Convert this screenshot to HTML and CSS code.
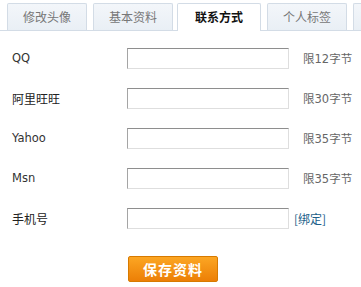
FILE: index.html
```html
<!DOCTYPE html>
<html>
<head>
<meta charset="utf-8">
<link rel="stylesheet" href="styles.css">
</head>
<body>
<div class="tabs">
  <a class="tab">修改头像</a>
  <a class="tab">基本资料</a>
  <a class="tab active">联系方式</a>
  <a class="tab">个人标签</a>
  <a class="tab tab-edge"></a>
</div>
<form class="form">
  <div class="row"><label class="label latin">QQ</label><input class="field" type="text"><span class="hint">限12字节</span></div>
  <div class="row"><label class="label">阿里旺旺</label><input class="field" type="text"><span class="hint">限30字节</span></div>
  <div class="row"><label class="label latin">Yahoo</label><input class="field" type="text"><span class="hint">限35字节</span></div>
  <div class="row"><label class="label latin">Msn</label><input class="field" type="text"><span class="hint">限35字节</span></div>
  <div class="row"><label class="label">手机号</label><input class="field" type="text"><a class="bind">[绑定]</a></div>
  <div class="actions"><button class="save" type="button">保存资料</button></div>
</form>
</body>
</html>
```
FILE: styles.css
```css
html, body {
  margin: 0;
  padding: 0;
  background: #fff;
  overflow: hidden;
}
body {
  width: 361px;
  height: 287px;
  font-family: "DejaVu Sans", "Noto Sans CJK SC", sans-serif;
  font-size: 12px;
  color: #333;
}
.tabs {
  display: flex;
  gap: 6px;
  padding: 3px 0 0 7px;
  border-bottom: 1px solid #d3dce6;
  height: 27px;
  white-space: nowrap;
}
.tab {
  flex: none;
  width: 78px;
  height: 26px;
  line-height: 26px;
  text-align: center;
  border: 1px solid #d3dce6;
  border-bottom: none;
  border-radius: 2px 2px 0 0;
  background: linear-gradient(#f3f6fa, #e9eff5);
  color: #777;
  font-family: "Noto Sans CJK SC", sans-serif;
  font-size: 12px;
}
.tab.active {
  width: 82px;
  height: 27px;
  margin-left: -2px;
  background: #fff;
  color: #111;
  font-weight: bold;
  position: relative;
  z-index: 1;
}
.tab.tab-edge {
  width: 9px;
  border-right: none;
  border-radius: 2px 0 0 0;
}
.form {
  margin: 0;
  padding-top: 7px;
}
.row {
  display: flex;
  align-items: center;
  height: 40px;
}
.label {
  width: 115px;
  padding-left: 12px;
  flex: none;
  font-family: "Noto Sans CJK SC", sans-serif;
  font-size: 12px;
  color: #222;
}
.label.latin {
  font-family: "DejaVu Sans", sans-serif;
  font-size: 11.5px;
  color: #333;
}
.field {
  box-sizing: border-box;
  width: 162px;
  height: 21px;
  margin: 0;
  padding: 0 3px;
  border: 1px solid;
  border-color: #8e8e8e #dedede #dedede #a5a5a5;
  background: #fff;
  flex: none;
}
.hint {
  margin-left: 14px;
  font-family: "DejaVu Sans", "Noto Sans CJK SC", sans-serif;
  font-size: 11.5px;
  color: #666;
}
.bind {
  margin-left: 5px;
  font-family: "Noto Sans CJK SC", sans-serif;
  font-size: 12px;
  color: #1d5f8a;
}
.actions {
  padding: 18px 0 0 128px;
}
.save {
  width: 90px;
  height: 26px;
  margin: 0;
  padding: 0;
  border: 1px solid #d77a00;
  border-radius: 2px;
  background: linear-gradient(#fca623, #ec7f06);
  color: #fff;
  font-family: "Noto Sans CJK SC", sans-serif;
  font-size: 14px;
  font-weight: bold;
  letter-spacing: 1px;
  line-height: 24px;
}
```
